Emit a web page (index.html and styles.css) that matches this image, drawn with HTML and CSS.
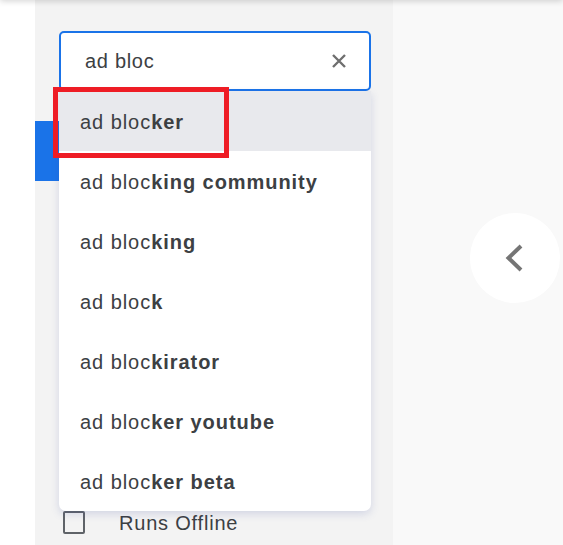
FILE: index.html
```html
<!DOCTYPE html>
<html>
<head>
<meta charset="utf-8">
<link rel="stylesheet" href="styles.css">
</head>
<body>
<div class="topshadow"></div>
<div class="page">
  <div class="strip"></div>
  <div class="panel">
    <div class="search">
      <div class="input">
        <span class="query">ad bloc</span>
        <svg class="clear" width="14" height="14" viewBox="0 0 14 14"><path d="M1 1L13 13M13 1L1 13" stroke="#6f6f6f" stroke-width="2.4" fill="none"/></svg>
      </div>
      <ul class="dropdown">
        <li class="item active">ad bloc<b>ker</b><span class="highlight"></span></li>
        <li class="item">ad bloc<b>king community</b></li>
        <li class="item">ad bloc<b>king</b></li>
        <li class="item">ad bloc<b>k</b></li>
        <li class="item">ad bloc<b>kirator</b></li>
        <li class="item">ad bloc<b>ker youtube</b></li>
        <li class="item">ad bloc<b>ker beta</b></li>
      </ul>
    </div>
    <div class="category"></div>
    <label class="check">
      <span class="box"></span>
      <span class="label">Runs Offline</span>
    </label>
  </div>
  <div class="main">
    <div class="circle">
      <svg width="90" height="90" viewBox="0 0 90 90"><path d="M51 33L38.5 45L51 57" stroke="#757575" stroke-width="4" fill="none"/></svg>
    </div>
  </div>
</div>
</body>
</html>
```
FILE: styles.css
```css
html, body {
  margin: 0;
  padding: 0;
  height: 100%;
}
body {
  font-family: "Liberation Sans", Arial, sans-serif;
  color: #3c4043;
  overflow: hidden;
  position: relative;
}
.topshadow {
  position: absolute;
  left: 0;
  right: 0;
  top: -10px;
  height: 10px;
  box-shadow: 0 1px 6px rgba(0,0,0,0.18);
  z-index: 5;
}
.page {
  display: flex;
  height: 545px;
}
.strip {
  width: 35px;
  background: #ffffff;
}
.panel {
  width: 358px;
  background: #f3f3f3;
  display: flex;
  flex-direction: column;
}
.search {
  position: relative;
  margin-top: 31px;
  margin-left: 24px;
  width: 312px;
}
.input {
  box-sizing: border-box;
  height: 60px;
  border: 2px solid #1a73e8;
  border-radius: 5px;
  background: #fff;
  display: flex;
  align-items: center;
  padding-left: 24px;
  padding-right: 23px;
}
.query {
  flex: 1;
  font-size: 20px;
  letter-spacing: 0.7px;
  color: #3c4043;
  padding-top: 1px;
}
.clear {
  display: block;
}
.dropdown {
  position: absolute;
  top: 60px;
  left: 0;
  right: 0;
  margin: 0;
  padding: 0;
  list-style: none;
  background: #fff;
  border-radius: 0 0 7px 7px;
  box-shadow: 0 3px 8px rgba(60,80,160,0.18);
  z-index: 3;
}
.item {
  position: relative;
  box-sizing: border-box;
  height: 60px;
  display: flex;
  align-items: center;
  padding-left: 21px;
  padding-top: 2px;
  font-size: 20px;
  letter-spacing: 0.95px;
  color: #3c4043;
}
.item b {
  font-weight: bold;
}
.item.active {
  background: #e8e9ed;
}
.highlight {
  position: absolute;
  left: -6px;
  top: -4px;
  width: 166px;
  height: 61px;
  border: 5px solid #ee1c25;
}
.category {
  margin-top: 30px;
  width: 24px;
  height: 60px;
  background: #1a73e8;
}
.check {
  margin-top: 330px;
  margin-left: 28px;
  display: flex;
  align-items: center;
  height: 23px;
}
.box {
  box-sizing: border-box;
  width: 22px;
  height: 23px;
  border: 2.5px solid #5f6368;
  border-radius: 2px;
}
.label {
  margin-left: 34px;
  padding-top: 2px;
  font-size: 20px;
  letter-spacing: 0.8px;
  color: #3c4043;
}
.main {
  flex: 1;
  background: #f9f9f9;
  display: flex;
  justify-content: flex-end;
  align-items: flex-start;
  padding-top: 213px;
  padding-right: 3px;
}
.circle {
  width: 90px;
  height: 90px;
  border-radius: 50%;
  background: #fff;
}
.circle svg {
  display: block;
}
```
